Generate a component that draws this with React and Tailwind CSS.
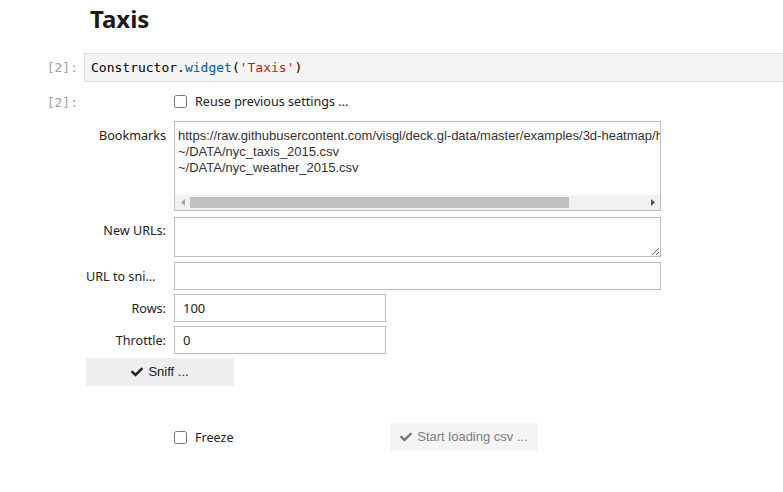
import { FaCheck } from 'react-icons/fa'

const ui = { fontFamily: '"Noto Sans", "DejaVu Sans", sans-serif' }
const arial = { fontFamily: '"Liberation Sans", Arial, sans-serif' }
const mono = { fontFamily: '"DejaVu Sans Mono", "Liberation Mono", monospace' }

const bookmarks = [
    'https://raw.githubusercontent.com/visgl/deck.gl-data/master/examples/3d-heatmap/heatmap-data.csv',
    '~/DATA/nyc_taxis_2015.csv',
    '~/DATA/nyc_weather_2015.csv',
]

function Prompt({ children }) {
    return (
        <div className="w-[84px] shrink-0 pr-[6px] text-right text-[13px] text-[#a0a0a0]" style={mono}>
            {children}
        </div>
    )
}

function Label({ children, align = 'text-right' }) {
    return (
        <div className={`w-[80px] shrink-0 h-[28px] leading-[30px] mr-[8px] ${align} text-[12.6px] text-[#212121] truncate`} style={ui}>
            {children}
        </div>
    )
}

function TextInput({ value, width = 'w-[487px]' }) {
    return (
        <input
            type="text"
            defaultValue={value}
            className={`${width} h-[28px] border border-[#bdbdbd] px-[8px] text-[13px] text-[#212121] outline-none`}
            style={ui}
        />
    )
}

function Checkbox({ label }) {
    return (
        <label className="flex items-center h-[28px]">
            <div className="w-[80px] mr-[8px] shrink-0" />
            <input type="checkbox" className="w-[13px] h-[13px] m-0" />
            <span className="ml-[8px] pt-[2px] text-[12.6px] text-[#212121]" style={ui}>{label}</span>
        </label>
    )
}

export default function App() {
    return (
        <div className="w-[783px] h-[492px] overflow-hidden bg-white">
            {/* Heading */}
            <h1 className="pl-[90px] pt-[5px] h-[40px] text-[24px] leading-[28px] font-bold text-[#1a1a1a]" style={ui}>
                Taxis
            </h1>

            {/* Input cell */}
            <div className="flex items-center mt-[13px]">
                <Prompt>[2]:</Prompt>
                <div className="w-[702px] h-[29px] shrink-0 bg-[#f5f5f5] border border-[#e0e0e0] pl-[6px] flex items-center text-[13px] text-[#000]" style={mono}>
                    <span>Constructor.</span>
                    <span className="text-[#0055aa]">widget</span>
                    <span>(</span>
                    <span className="text-[#ba2121]">'Taxis'</span>
                    <span>)</span>
                </div>
            </div>

            {/* Output cell */}
            <div className="flex mt-[5px]">
                <div className="pt-[6px]">
                    <Prompt>[2]:</Prompt>
                </div>
                <div className="pl-[2px] flex flex-col">
                    <Checkbox label="Reuse previous settings ..." />

                    <div className="flex mt-[6px]">
                        <Label>Bookmarks</Label>
                        <div className="w-[487px] h-[90px] border border-[#bdbdbd] flex flex-col">
                            <div className="flex-1 overflow-hidden pl-[3px] pt-[6px] text-[13px] leading-[16px] text-[#333] whitespace-pre" style={arial}>
                                {bookmarks.map(b => <div key={b}>{b}</div>)}
                            </div>
                            {/* horizontal scrollbar */}
                            <div className="h-[15px] bg-[#f1f1f1] flex items-center">
                                <div className="w-[15px] h-[15px] flex items-center justify-center">
                                    <svg width="4" height="7" viewBox="0 0 4 7"><path d="M4 0 L0 3.5 L4 7 Z" fill="#a3a3a3" /></svg>
                                </div>
                                <div className="flex-1 h-[15px] py-[2px]">
                                    <div className="w-[379px] h-full bg-[#c1c1c1]" />
                                </div>
                                <div className="w-[15px] h-[15px] flex items-center justify-center">
                                    <svg width="4" height="7" viewBox="0 0 4 7"><path d="M0 0 L4 3.5 L0 7 Z" fill="#505050" /></svg>
                                </div>
                            </div>
                        </div>
                    </div>

                    <div className="flex mt-[6px]">
                        <div className="-mt-[1px]">
                            <Label>New URLs:</Label>
                        </div>
                        <textarea className="w-[487px] h-[40px] border border-[#bdbdbd] outline-none resize" />
                    </div>

                    <div className="flex mt-[5px]">
                        <Label align="text-left">URL to sni…</Label>
                        <TextInput value="" />
                    </div>

                    <div className="flex mt-[4px]">
                        <Label>Rows:</Label>
                        <TextInput value="100" width="w-[212px]" />
                    </div>

                    <div className="flex mt-[4px]">
                        <Label>Throttle:</Label>
                        <TextInput value="0" width="w-[212px]" />
                    </div>

                    <button className="mt-[4px] w-[148px] h-[28px] bg-[#eeeeee] flex items-center justify-center gap-[5px] text-[13px] text-[#212121]" style={arial}>
                        <FaCheck className="w-[12px] h-[12px]" />
                        <span>Sniff ...</span>
                    </button>

                    <div className="flex items-center mt-[37px]">
                        <div className="w-[300px]">
                            <Checkbox label="Freeze" />
                        </div>
                        <button disabled className="ml-[4px] w-[148px] h-[28px] bg-[#f5f5f5] flex items-center justify-center gap-[5px] text-[13px] text-[#7d7d7d]" style={arial}>
                            <FaCheck className="w-[12px] h-[12px] text-[#777]" />
                            <span>Start loading csv ...</span>
                        </button>
                    </div>
                </div>
            </div>
        </div>
    )
}
